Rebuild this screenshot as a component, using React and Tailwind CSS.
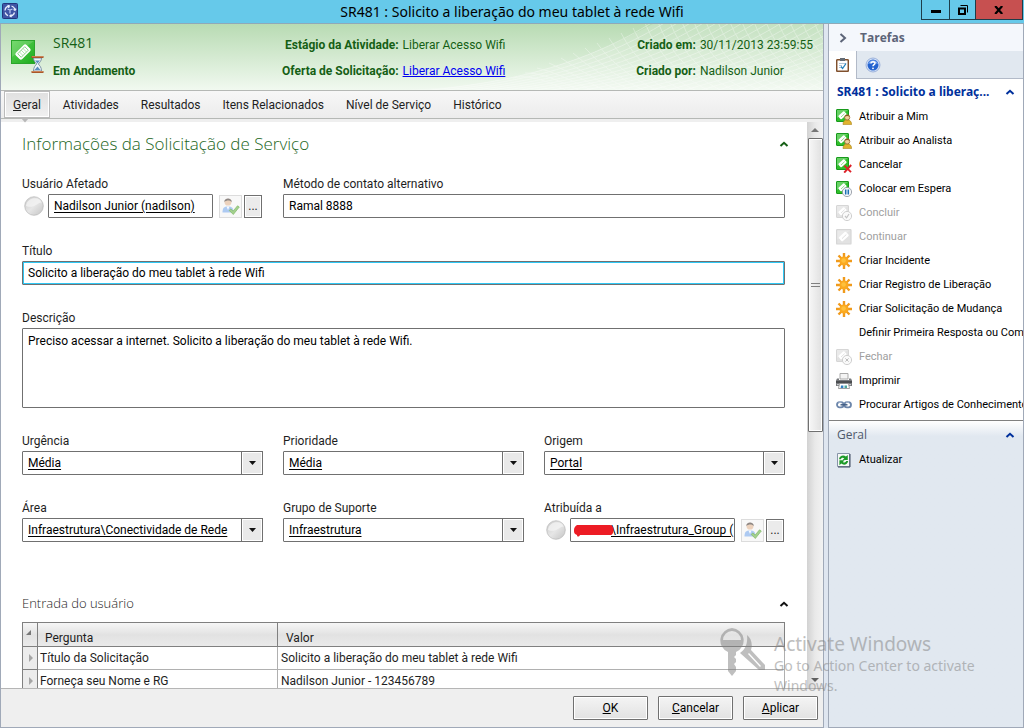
import React, { useState } from 'react';

const TicketShape = ({ gray }) => (
    <>
        <rect x="0.5" y="0.5" width="12" height="12" rx="0.5" fill={gray ? '#e2e2e2' : '#2fbf2a'} stroke={gray ? '#d6d6d6' : '#189a1c'} />
        <path d="M1 1h11L1 9z" fill="#fff" opacity="0.28" />
        <rect x="2.5" y="4" width="8" height="4.6" rx="1" fill="#fff" transform="rotate(-42 6.5 6.3)" />
        <path d="M5 8l3.6-3.4" stroke={gray ? '#dcdcdc' : '#7ed47a'} strokeWidth="0.8" />
    </>
);

const Star = () => (
    <svg width="16" height="16" viewBox="0 0 16 16">
        <path d="M8 0v16M0 8h16M2.5 2.5l11 11M13.5 2.5l-11 11" stroke="#f09a1c" strokeWidth="2.4" />
        <circle cx="8" cy="8" r="4.5" fill="#fba91f" />
        <circle cx="7.6" cy="7.5" r="2.3" fill="#ffc03a" />
    </svg>
);

const TaskIcon = ({ type }) => {
    if (type === 'none') return <span className="size-4" />;
    if (type === 'star') return <Star />;
    if (type === 'print') {
        return (
            <svg width="16" height="16" viewBox="0 0 16 16">
                <path d="M4 .5h8V6H4z" fill="#f4f4f4" stroke="#aaa" />
                <path d="M1 5.5h2V7h10V5.5h2l1 2V13H0V7.5z" fill="#77797c" />
                <path d="M0 8h16v2H0z" fill="#4b4d50" />
                <path d="M1 11h14v1.2H1z" fill="#c9cbce" />
                <path d="M3.5 10.5h9l1 5h-11z" fill="#fff" stroke="#888" strokeWidth="0.8" />
                <path d="M5 12.5h2.4V15H4.7z" fill="#2f7fc4" />
                <path d="M8.5 12.5H11V15H8.5z" fill="#4ba69c" />
            </svg>
        );
    }
    if (type === 'link') {
        return (
            <svg width="16" height="16" viewBox="0 0 16 16" fill="none">
                <rect x="1" y="5.2" width="6.6" height="5.2" rx="2.6" stroke="#6c86ab" strokeWidth="1.8" />
                <rect x="8.4" y="5.2" width="6.6" height="5.2" rx="2.6" stroke="#6c86ab" strokeWidth="1.8" />
                <path d="M4.5 7.8h7" stroke="#3d587f" strokeWidth="1.4" />
                <path d="M2.5 5.2h3M10 5.2h3" stroke="#c4d1e4" strokeWidth="0.8" />
            </svg>
        );
    }
    if (type === 'refresh') {
        return (
            <svg width="16" height="16" viewBox="0 0 16 16">
                <path d="M1.5 1.5h12v13h-12z" fill="#f6f9f6" stroke="#8794a8" />
                <path d="M14 2v13H2" stroke="#3e4a60" fill="none" />
                <path d="M3 7.2c.5-3.6 4.6-4.7 6.9-2.6L11.8 3v5H6.6l1.7-1.7C7 5.4 5.4 5.7 5 7.2z" fill="#1d9a28" />
                <path d="M12.2 9c-.5 3.6-4.6 4.7-6.9 2.6L3.4 13.2v-5h5.2L6.9 9.9c1.3.9 2.9.6 3.3-.9z" fill="#1d9a28" />
            </svg>
        );
    }
    const gray = type === 'done' || type === 'ticket' || type === 'closed';
    return (
        <svg width="16" height="16" viewBox="0 0 16 16">
            {type === 'ticket' ? (
                <g transform="scale(1.2)"><TicketShape gray /></g>
            ) : (
                <TicketShape gray={gray} />
            )}
            {type === 'user' && (
                <>
                    <path d="M7 15.6c0-3 1.4-4.8 4.2-4.8s4.4 1.8 4.4 4.8z" fill="#e0b32e" stroke="#a87f14" strokeWidth="0.6" />
                    <circle cx="11.2" cy="8.4" r="2.6" fill="#f0cf9c" stroke="#96682c" strokeWidth="0.8" />
                    <path d="M8.7 7.8c.2-2.8 4.8-2.8 5 0-1.6-.8-3.2-1-5 0z" fill="#8a5a23" />
                </>
            )}
            {type === 'cancel' && <path d="M8.4 8.6l6.6 6.6M15.2 8l-7 7.6" stroke="#dd2027" strokeWidth="1.9" />}
            {type === 'pause' && (
                <>
                    <circle cx="11" cy="11" r="4.6" fill="#f5f7fa" stroke="#8b929c" strokeWidth="0.8" />
                    <path d="M9.7 8.6v4.8M12.3 8.6v4.8" stroke="#1c6fb5" strokeWidth="1.5" />
                </>
            )}
            {type === 'done' && (
                <>
                    <circle cx="11" cy="11" r="4.6" fill="#fafafa" stroke="#cfcfcf" />
                    <path d="M9 11l1.6 1.8L13 9" stroke="#c4c4c4" strokeWidth="1.2" fill="none" />
                </>
            )}
            {type === 'closed' && (
                <>
                    <circle cx="11" cy="11" r="4.6" fill="#fafafa" stroke="#cfcfcf" />
                    <path d="M9.4 9.4l3.2 3.2M12.6 9.4l-3.2 3.2" stroke="#bdbdbd" fill="none" />
                </>
            )}
        </svg>
    );
};

const Caret = ({ color }) => (
    <svg width="10" height="6" viewBox="0 0 10 6" fill="none" stroke={color} strokeWidth="2">
        <path d="M1.5 5L5 1.8 8.5 5" />
    </svg>
);

const RequestIcon = () => (
    <svg width="34" height="34" viewBox="0 0 34 34">
        <defs>
            <linearGradient id="req" x1="0" y1="0" x2="1" y2="1">
                <stop offset="0" stopColor="#5fd456" />
                <stop offset="1" stopColor="#1cab1e" />
            </linearGradient>
        </defs>
        <rect x="0.5" y="0.5" width="23" height="23" fill="url(#req)" stroke="#2aa52b" />
        <path d="M1 1h22L1 17z" fill="#fff" opacity="0.15" />
        <g transform="rotate(-45 12 12)">
            <rect x="4.5" y="7.5" width="15" height="9" rx="2" fill="#fff" />
            <rect x="7" y="9.5" width="10" height="5" fill="none" stroke="#5cc45a" strokeWidth="0.7" />
            <path d="M9.5 9.5v5M12 9.5v5M14.5 9.5v5" stroke="#8ad587" strokeWidth="0.6" />
        </g>
        <path d="M22.5 18h8c0 3-2 4.5-3.2 6 1.2 1.5 3.2 3 3.2 7h-8c0-4 2-5.5 3.2-7-1.2-1.5-3.2-3-3.2-6z" fill="#f0f6fb" stroke="#71889e" strokeWidth="0.9" />
        <path d="M24 20.5h5l-2.5 3zM23.5 30l3-3.5 3 3.5z" fill="#5d8fbf" />
        <path d="M20.5 17h12M20.5 32h12" stroke="#a9572a" strokeWidth="2" />
        <path d="M21 16.5h11M21 31.5h11" stroke="#e2a070" strokeWidth="0.6" />
    </svg>
);

const UserCheckIcon = () => (
    <svg width="19" height="19" viewBox="0 0 19 19">
        <path d="M1.5 15.5c0-4.5 1.5-6 5.5-6s5.5 1.5 5.5 6z" fill="#adcaf2" />
        <path d="M5.5 9.5L7 13l1.5-3.5z" fill="#f5f9ff" />
        <circle cx="7" cy="5.2" r="3.4" fill="#ecd2bd" />
        <path d="M3.3 5.2C3 .4 11 .4 10.8 5.2c-1.3-1.9-5.3-2.3-7.5 0z" fill="#8d8784" />
        <path d="M8.2 13.4l1.8-1.5 2 2.3 4.5-5.4 1.8 1.2-6 7.5z" fill="#a4d18d" stroke="#80b768" strokeWidth="0.7" />
    </svg>
);

const fieldClass = 'h-6 w-full min-w-0 rounded-[1px] border border-[#707070] bg-white px-[5px] text-[12px] text-black outline-none';

const Field = ({ label, id, className = '', children }) => (
    <div className={className}>
        <label htmlFor={id} className="mb-0.5 block leading-4">{label}</label>
        {children}
    </div>
);

const SelectField = ({ label, id, value }) => (
    <Field label={label} id={id}>
        <div className="relative">
            <select id={id} className={`${fieldClass} appearance-none pr-6 underline underline-offset-2`}>
                <option>{value}</option>
            </select>
            <span className="pointer-events-none absolute inset-y-0 right-0 flex w-[22px] items-center justify-center border border-[#707070] bg-[#e9e9e9] shadow-[inset_0_0_0_1px_#fff]">
                <svg width="7" height="4" viewBox="0 0 7 4"><path d="M0 0h7L3.5 4z" fill="#111" /></svg>
            </span>
        </div>
    </Field>
);

const UserPicker = ({ label, id, value, redacted }) => (
    <Field label={label} id={id}>
        <div className="flex h-6 items-center pl-0.5">
            <svg width="20" height="20" viewBox="0 0 20 20" className="mr-1 shrink-0">
                <defs>
                    <linearGradient id={`${id}-orb`} x1="0" y1="0" x2="1" y2="1">
                        <stop offset="0" stopColor="#c9c9c9" />
                        <stop offset="0.5" stopColor="#e6e6e6" />
                        <stop offset="1" stopColor="#c4c4c4" />
                    </linearGradient>
                </defs>
                <circle cx="10" cy="10" r="9.3" fill={`url(#${id}-orb)`} stroke="#b9b9b9" strokeWidth="0.7" />
                <path d="M2 10c1-9 13-10 15.5-3.5C13 7 10 13 2 10z" fill="#f3f3f3" opacity="0.8" />
            </svg>
            <div className="relative min-w-0 flex-1">
                <input id={id} defaultValue={value} className={`${fieldClass} underline underline-offset-2 ${redacted ? 'pl-10 pr-0' : ''}`} />
                {redacted && (
                    <svg width="40" height="13" viewBox="0 0 40 13" className="absolute top-1.5 left-1">
                        <path d="M3 1h32c3 0 5 2 4.5 5-.3 3-1 5-3 5H6c-1 2-3 2-3 0C0 10 0 8 0 6s1-4 3-5z" fill="#ed1c24" />
                    </svg>
                )}
            </div>
            <button type="button" aria-label="Verificar usuário" className="ml-1.5 flex h-[23px] w-[23px] shrink-0 items-center justify-center border border-[#dcdcdc] bg-[#f8f8f8]">
                <UserCheckIcon />
            </button>
            <button type="button" className="mr-px ml-0.5 h-[23px] w-[18px] shrink-0 border border-[#707070] bg-[#ebebeb] leading-5 shadow-[inset_0_0_0_1px_#fff]">...</button>
        </div>
    </Field>
);

const tabs = ['Geral', 'Atividades', 'Resultados', 'Itens Relacionados', 'Nível de Serviço', 'Histórico'];

const tasks = [
    { icon: 'user', text: 'Atribuir a Mim' },
    { icon: 'user', text: 'Atribuir ao Analista' },
    { icon: 'cancel', text: 'Cancelar' },
    { icon: 'pause', text: 'Colocar em Espera' },
    { icon: 'done', text: 'Concluir', disabled: true },
    { icon: 'ticket', text: 'Continuar', disabled: true },
    { icon: 'star', text: 'Criar Incidente' },
    { icon: 'star', text: 'Criar Registro de Liberação' },
    { icon: 'star', text: 'Criar Solicitação de Mudança' },
    { icon: 'none', text: 'Definir Primeira Resposta ou Com' },
    { icon: 'closed', text: 'Fechar', disabled: true },
    { icon: 'print', text: 'Imprimir' },
    { icon: 'link', text: 'Procurar Artigos de Conhecimento' },
];

const answers = [
    ['Título da Solicitação', 'Solicito a liberação do meu tablet à rede Wifi'],
    ['Forneça seu Nome e RG', 'Nadilson Junior - 123456789'],
];

const TitleBar = () => (
    <div className="relative flex h-6 shrink-0 items-start justify-between border-b border-[#8fa9b8] bg-[#66c9ea]">
        <svg width="16" height="16" viewBox="0 0 16 16" className="mt-[3px] ml-0.5">
            <rect x="0.5" y="0.5" width="15" height="15" rx="1" fill="#3f55a5" stroke="#23357c" />
            <g fill="none" stroke="#e8eefc" strokeWidth="1.3">
                <path d="M3 7.5A5 5 0 0 1 7 3M9.5 3A5 5 0 0 1 13 7M12.5 9.5A5 5 0 0 1 8 13M6 12.7A5 5 0 0 1 3.2 9.5" />
                <path d="M5.5 2.5L7.3 3 6.5 5M11.5 6.5l1.5.8 1-1.6M9.5 11.5L8 13l1.6 1" />
            </g>
            <path d="M5.5 6l2.5 1 2.5-1M8 7v3.5" stroke="#b9c9f2" strokeWidth="1.2" fill="none" />
        </svg>
        <h1 className="pointer-events-none absolute inset-x-0 text-center font-['Noto_Sans',sans-serif] text-[14px] leading-6 text-black">
            SR481 : Solicito a liberação do meu tablet à rede Wifi
        </h1>
        <div className="mr-px flex h-5 border border-t-0 border-[#1d3d4a]">
            <button type="button" aria-label="Minimizar" className="flex w-7 items-center justify-center border-r border-[#1d3d4a]">
                <span className="mt-1 h-[3px] w-2.5 bg-black" />
            </button>
            <button type="button" aria-label="Restaurar" className="flex w-[26px] items-center justify-center border-r border-[#1d3d4a]">
                <svg width="10" height="10" viewBox="0 0 10 10" fill="none" stroke="#000">
                    <path d="M1 3.5h6V9H1z" strokeWidth="2" />
                    <path d="M2.5.5h7v7" />
                </svg>
            </button>
            <button type="button" aria-label="Fechar" className="flex w-[46px] items-center justify-center bg-[#c75050]">
                <svg width="10" height="8" viewBox="0 0 10 8" stroke="#000" strokeWidth="2.2"><path d="M1.2 0l7 8M8.2 0l-7 8" /></svg>
            </button>
        </div>
    </div>
);

const Header = () => {
    // two families of curves crossing towards the right-hand corner
    const rays = Array.from({ length: 30 }, (_, i) => i);
    return (
        <header className="relative h-[67px] shrink-0 overflow-hidden border-b border-[#b5b8b5] bg-linear-to-b from-[#b8dbb3] to-[#f1f9f0] text-[#155f15]">
            <svg className="absolute inset-y-0 right-0" width="420" height="66" viewBox="0 0 420 66">
                <path d="M0 66C110 62 180 38 250 0h170v66z" fill="#fff" opacity="0.18" />
                <g fill="none" stroke="#fff" strokeWidth="1" opacity="0.35">
                    {rays.map((i) => (
                        <path key={i} d={`M${i * 18 - 20} 70C${110 + i * 15} ${62 - i} ${185 + i * 13} 38 ${250 + i * 13} -2`} />
                    ))}
                    {rays.map((i) => (
                        <path key={`b${i}`} d={`M${110 + i * 12} ${Math.max(-4, 54 - i * 5)}Q${130 + i * 12} 48 ${170 + i * 13} 70`} />
                    ))}
                </g>
            </svg>
            <div className="relative flex h-full items-start justify-between px-2.5">
                <div className="flex">
                    <div className="pt-4"><RequestIcon /></div>
                    <div className="pt-[9px] pl-2">
                        <div className="font-['Open_Sans',sans-serif] text-[14px] leading-5">SR481</div>
                        <div className="mt-2 leading-5 font-bold">Em Andamento</div>
                    </div>
                </div>
                <dl className="grid grid-cols-[auto_auto] gap-x-1 gap-y-1.5 pt-[11px] pl-4 leading-5">
                    <dt className="text-right font-bold">Estágio da Atividade:</dt>
                    <dd>Liberar Acesso Wifi</dd>
                    <dt className="text-right font-bold">Oferta de Solicitação:</dt>
                    <dd><a href="#oferta" className="text-[#0000f0] underline">Liberar Acesso Wifi</a></dd>
                </dl>
                <dl className="grid grid-cols-[auto_auto] gap-x-1 gap-y-1.5 pt-[11px] leading-5">
                    <dt className="text-right font-bold">Criado em:</dt>
                    <dd>30/11/2013 23:59:55</dd>
                    <dt className="text-right font-bold">Criado por:</dt>
                    <dd>Nadilson Junior</dd>
                </dl>
            </div>
        </header>
    );
};

const TasksPane = () => (
    <aside className="flex w-[196px] shrink-0 flex-col border border-t-0 border-[#a0a9b8] bg-[#e1e8f0] text-[11px]">
        <div className="flex h-[27px] shrink-0 items-center bg-[#f4f7fc] pl-2.5">
            <svg width="8" height="10" viewBox="0 0 8 10" fill="none" stroke="#5c6478" strokeWidth="2"><path d="M1.5 1L6 5 1.5 9" /></svg>
            <h2 className="ml-[13px] font-['Open_Sans',sans-serif] text-[12px] font-bold text-[#5c6478]">Tarefas</h2>
        </div>
        <div className="flex h-7 shrink-0">
            <button type="button" aria-label="Tarefas" className="flex w-[27px] items-center justify-center bg-white">
                <svg width="13" height="14" viewBox="0 0 13 14">
                    <rect x="0.7" y="1.7" width="11.6" height="11.6" rx="0.8" fill="#fff" stroke="#80502d" strokeWidth="1.5" />
                    <path d="M4 0h5v3H4z" fill="#636b75" />
                    <path d="M3 5.5h7M3 7.5h3M3 9.5h3" stroke="#9db7cf" strokeWidth="0.8" />
                    <path d="M5 8.5l1.6 2L10 5.5" fill="none" stroke="#2380bb" strokeWidth="1.3" />
                </svg>
            </button>
            <div className="flex flex-1 items-center border-b border-l border-[#b2bac8] pl-2">
                <button type="button" aria-label="Ajuda">
                    <svg width="16" height="16" viewBox="0 0 16 16">
                        <circle cx="8" cy="8" r="7" fill="#d4e1f7" stroke="#8ba4d4" strokeWidth="0.8" />
                        <circle cx="8" cy="8" r="5.5" fill="#2463cf" />
                        <path d="M3 7c1-5 9-5 10 0-3-1.5-7-1.5-10 0z" fill="#77a5f0" />
                        <path d="M6 6.5c0-2.6 4.2-2.3 4-.2C9.9 7.7 8 7.7 8 9.3" fill="none" stroke="#fff" strokeWidth="1.5" />
                        <circle cx="8" cy="11.3" r="0.9" fill="#fff" />
                    </svg>
                </button>
            </div>
        </div>
        <section className="shrink-0 overflow-hidden border-b border-[#808080] bg-white pb-[3px]">
            <div className="flex h-[26px] items-center justify-between px-2">
                <h3 className="font-['Noto_Sans',sans-serif] text-[12px] font-bold whitespace-nowrap text-[#00309c]">SR481 : Solicito a liberaç...</h3>
                <Caret color="#00309c" />
            </div>
            <ul>
                {tasks.map((task) => (
                    <li key={task.text} className="flex h-6">
                        <button type="button" disabled={task.disabled} className="flex items-center gap-[7px] pl-[7px] whitespace-nowrap text-black disabled:text-[#a0a0a0]">
                            <TaskIcon type={task.icon} />
                            {task.text}
                        </button>
                    </li>
                ))}
            </ul>
        </section>
        <section className="flex-1 bg-linear-to-b from-white to-[#e1e8f0] to-5%">
            <div className="flex h-[27px] items-center justify-between px-2">
                <h3 className="font-['Open_Sans',sans-serif] text-[12px] text-[#505a6c]">Geral</h3>
                <Caret color="#00309c" />
            </div>
            <button type="button" className="flex h-6 items-center gap-[7px] pl-[7px] text-black">
                <TaskIcon type="refresh" />
                Atualizar
            </button>
        </section>
    </aside>
);

const ScrollBar = () => (
    <div className="flex w-4 shrink-0 flex-col items-center bg-linear-to-r from-[#d2d2d2] via-[#e9e9e9] to-[#f2f2f2]">
        <div className="flex h-4 shrink-0 items-center">
            <svg width="8" height="4" viewBox="0 0 8 4"><path d="M0 4h8L4 0z" fill="#777" /></svg>
        </div>
        <div className="flex h-[52%] w-[15px] flex-col items-center justify-center gap-0.5 rounded-[1px] border border-[#707070] bg-linear-to-r from-[#f7f7f7] to-[#e0e0e0] shadow-[inset_0_0_0_1px_#fff]">
            <span className="h-px w-[9px] bg-[#808080]" />
            <span className="h-px w-[9px] bg-[#808080]" />
        </div>
        <div className="mt-auto flex h-4 items-center">
            <svg width="8" height="4" viewBox="0 0 8 4"><path d="M0 0h8L4 4z" fill="#606060" /></svg>
        </div>
    </div>
);

const Watermark = () => (
    <div className="pointer-events-none absolute right-[41px] bottom-8 flex gap-2 font-['Noto_Sans',sans-serif] text-[#808080] opacity-50">
        <svg width="46" height="50" viewBox="0 0 46 50" fill="#808080" className="-mt-1">
            <path fillRule="evenodd" d="M12 0a12.5 12.5 0 0 1 4 24v3l-2 2 2 2v3l-2 2 2 3v4l-4 5-4-5V24A12.5 12.5 0 0 1 12 0zM3 12h18A9 9 0 0 0 3 12z" />
            <path d="M27 7c4 3 6 9 4 15l14 15v5h-6L20 25c5-3 8-9 7-18zM29 25l-1 1 12 13 1-1z" fillRule="evenodd" />
        </svg>
        <div className="w-[209px]">
            <div className="text-[19px] leading-6">Activate Windows</div>
            <div className="text-[14px] leading-5">Go to Action Center to activate Windows.</div>
        </div>
    </div>
);

const App = () => {
    const [activeTab, setActiveTab] = useState('Geral');

    return (
        <div className="relative flex h-screen flex-col overflow-hidden bg-[#dfe6f0] font-['Roboto','Noto_Sans',sans-serif] text-[12px] text-[#1e1e1e]">
            <TitleBar />
            <div className="flex min-h-0 flex-1 gap-1">
                <main className="flex min-w-0 flex-1 flex-col border border-t-0 border-[#a0a9b8] bg-[#efefef]">
                    <Header />
                    <nav className="flex h-7 shrink-0 border-b border-[#b5b8b5] bg-linear-to-b from-[#f7f7f7] to-[#ececec] pl-[3px]">
                        {tabs.map((tab) => (
                            <button
                                key={tab}
                                type="button"
                                onClick={() => setActiveTab(tab)}
                                className={`relative mr-1 border px-2 ${activeTab === tab ? 'border-[#bbb] bg-linear-to-b from-[#e0e0e0] to-[#f0f0f0] shadow-[inset_0_0_0_1px_#fff]' : 'border-transparent'}`}
                            >
                                {tab === 'Geral' ? <><u>G</u>eral</> : tab}
                                {activeTab === tab && (
                                    <svg width="8" height="5" viewBox="0 0 8 5" className="absolute -bottom-[6px] left-4"><path d="M0 0h8L4 4.5z" fill="#b8b8b8" /></svg>
                                )}
                            </button>
                        ))}
                    </nav>
                    <div className="mt-[3px] flex min-h-0 flex-1 border-b border-[#b5b5b5] bg-white">
                        <form id="request" className="min-w-0 flex-1 overflow-hidden pt-2.5 pr-[18px] pl-[21px]">
                            <div className="flex h-6 items-center justify-between">
                                <h2 className="font-['Open_Sans',sans-serif] text-[17px] leading-5 font-light text-[#1c661c]">Informações da Solicitação de Serviço</h2>
                                <button type="button" aria-label="Recolher"><Caret color="#155f15" /></button>
                            </div>
                            <div className="mt-5 mr-1 grid grid-cols-3 gap-x-5 gap-y-[25px]">
                                <UserPicker label="Usuário Afetado" id="usuario" value="Nadilson Junior (nadilson)" />
                                <Field label="Método de contato alternativo" id="contato" className="col-span-2">
                                    <input id="contato" defaultValue="Ramal 8888" className={fieldClass} />
                                </Field>
                                <Field label="Título" id="titulo" className="col-span-3">
                                    <input id="titulo" defaultValue="Solicito a liberação do meu tablet à rede Wifi" className={`${fieldClass} shadow-[inset_0_0_0_1px_#2fc8f5]`} />
                                </Field>
                                <Field label="Descrição" id="descricao" className="col-span-3">
                                    <textarea
                                        id="descricao"
                                        defaultValue="Preciso acessar a internet. Solicito a liberação do meu tablet à rede Wifi."
                                        className="block h-20 w-full resize-none rounded-[1px] border border-[#707070] px-[5px] py-1 leading-4 text-black outline-none"
                                    />
                                </Field>
                                <SelectField label="Urgência" id="urgencia" value="Média" />
                                <SelectField label="Prioridade" id="prioridade" value="Média" />
                                <SelectField label="Origem" id="origem" value="Portal" />
                                <SelectField label="Área" id="area" value="Infraestrutura\Conectividade de Rede" />
                                <SelectField label="Grupo de Suporte" id="grupo" value="Infraestrutura" />
                                <UserPicker label="Atribuída a" id="atribuida" value="\Infraestrutura_Group (" redacted />
                            </div>
                            <div className="mt-[52px] flex h-5 items-center justify-between">
                                <h2 className="font-['Open_Sans',sans-serif] text-[13px] font-light">Entrada do usuário</h2>
                                <button type="button" aria-label="Recolher"><Caret color="#111" /></button>
                            </div>
                            <div className="mt-2 mr-1">
                                <table className="w-full table-fixed border-collapse border border-[#8a8a8a] text-left">
                                    <thead>
                                        <tr className="h-6 bg-linear-to-b from-[#f6f6f6] via-[#e2e2e2] to-[#ebebeb]">
                                            <th className="w-[15px] border border-[#808080] p-0">
                                                <svg width="5" height="5" viewBox="0 0 5 5" className="mb-1 ml-[3px]"><path d="M5 0v5H0z" fill="#777" /></svg>
                                            </th>
                                            <th className="w-60 border border-[#808080] pt-1.5 pr-0 pb-0 pl-[7px] leading-4 font-normal">Pergunta</th>
                                            <th className="border border-[#808080] pt-1.5 pr-0 pb-0 pl-2 leading-4 font-normal">Valor</th>
                                        </tr>
                                    </thead>
                                    <tbody>
                                        {answers.map(([question, answer]) => (
                                            <tr key={question} className="h-[23px]">
                                                <td className="border border-[#808080] bg-[#ececec] p-0">
                                                    <svg width="4" height="8" viewBox="0 0 4 8" className="ml-1.5"><path d="M0 0v8l4-4z" fill="#a5a5a5" /></svg>
                                                </td>
                                                <td className="border border-[#b0b0b0] p-0 pl-0.5 leading-4">{question}</td>
                                                <td className="border border-[#b0b0b0] p-0 pl-[3px] leading-4">{answer}</td>
                                            </tr>
                                        ))}
                                    </tbody>
                                </table>
                            </div>
                        </form>
                        <ScrollBar />
                    </div>
                    <footer className="flex h-[38px] shrink-0 items-start justify-end gap-2.5 pt-[7px] pr-[5px]">
                        {['OK', 'Cancelar', 'Aplicar'].map((name) => (
                            <button
                                key={name}
                                type="button"
                                className="h-6 w-[75px] rounded-[1px] border border-[#707070] bg-linear-to-b from-[#f4f4f4] to-[#e2e2e2] text-black shadow-[inset_0_0_0_1px_#fff]"
                            >
                                <u>{name[0]}</u>{name.slice(1)}
                            </button>
                        ))}
                    </footer>
                </main>
                <TasksPane />
            </div>
            <Watermark />
        </div>
    );
};

export default App;
